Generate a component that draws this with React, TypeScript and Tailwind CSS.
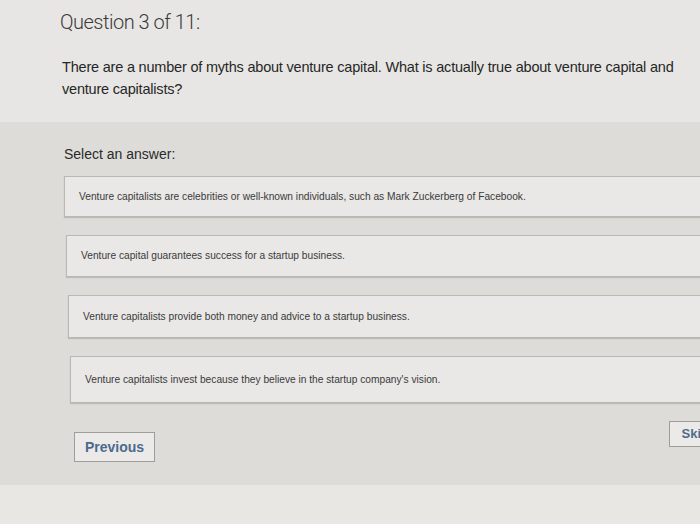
import React from 'react';

const answers = [
  { text: 'Venture capitalists are celebrities or well-known individuals, such as Mark Zuckerberg of Facebook.', h: 41 },
  { text: 'Venture capital guarantees success for a startup business.', h: 42 },
  { text: 'Venture capitalists provide both money and advice to a startup business.', h: 43 },
  { text: "Venture capitalists invest because they believe in the startup company's vision.", h: 47 },
];

const App: React.FC = () => {
  return (
    <div
      className="w-[700px] h-[524px] overflow-hidden bg-[#e4e3e1] text-[#2f2f2f]"
      style={{ fontFamily: '"Liberation Sans", Arial, sans-serif' }}
    >
      {/* Question header */}
      <div className="h-[122px] bg-[#e7e6e4] pl-[60px] pr-4 pt-[7px]">
        <h1 className="text-[20px] font-light text-[#3a3a3a] tracking-[-0.5px]" style={{ fontFamily: 'Roboto, sans-serif' }}>
          Question 3 of 11:
        </h1>
        <p className="mt-[19px] pl-[2px] w-[625px] text-[14.5px] leading-[22px] text-[#262626] tracking-[-0.2px]">
          There are a number of myths about venture capital. What is actually true about venture capital and venture capitalists?
        </p>
      </div>

      {/* Answers */}
      <div className="h-[363px] bg-[#dddcd9] pl-[64px] pt-[22px]">
        <div className="text-[14px] text-[#2a2a2a]">Select an answer:</div>
        <div className="mt-[11px] flex flex-col gap-[18px]">
          {answers.map((a, i) => (
            <div
              key={i}
              className="flex items-center bg-[#e9e8e6] border border-[#b9b8b5] border-r-0 shadow-[0_1px_1px_rgba(0,0,0,0.15)] pl-[14px]"
              style={{ marginLeft: i * 2, height: a.h }}
            >
              <span className="text-[10.2px] text-[#3a3a3a]">{a.text}</span>
            </div>
          ))}
        </div>
        <div className="mt-[20px] flex items-start justify-between">
          <button className="mt-[9px] ml-[10px] h-[30px] px-[10px] bg-[#ebeae8] border border-[#9e9d9a] text-[14px] font-bold text-[#4d6a8c]">
            Previous
          </button>
          <button className="-mt-[2px] h-[26px] pl-[12px] pr-[20px] -mr-[30px] bg-[#ebeae8] border border-[#9e9d9a] text-[13px] font-bold text-[#4d6a8c]">
            Skip
          </button>
        </div>
      </div>

      <div className="h-[40px] bg-[#e8e7e4]" />
    </div>
  );
};

export default App;
